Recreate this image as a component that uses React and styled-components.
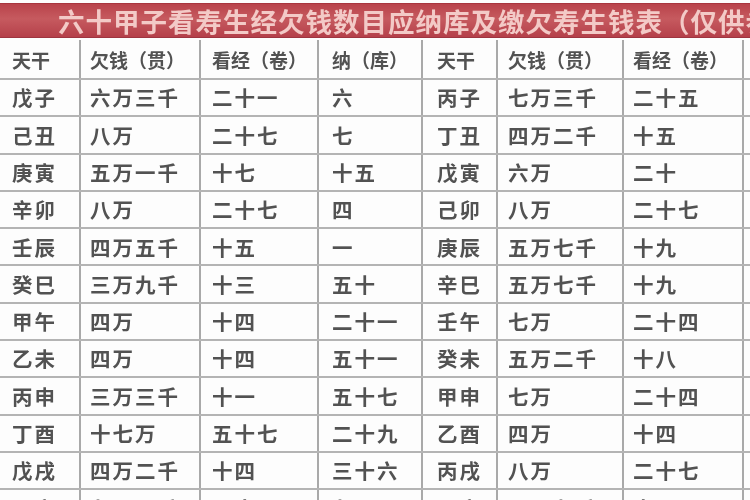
import * as React from "react";
import styled, { createGlobalStyle } from "styled-components";

const Global = createGlobalStyle`
	html, body {
		margin: 0;
		padding: 0;
		background: #ffffff;
	}
`;

const Page = styled.div`
	width: 750px;
	height: 500px;
	overflow: hidden;
	background: #fdfdfd;
	font-family: "Noto Sans CJK SC", "Noto Sans", sans-serif;
`;

const Banner = styled.div`
	margin-top: 3px;
	height: 33px;
	display: flex;
	align-items: center;
	padding-left: 58px;
	white-space: nowrap;
	overflow: hidden;
	background: linear-gradient(180deg, #b9434b 0%, #c65a5f 45%, #b5404a 100%);
	border-top: 1px solid #a8353e;
	border-bottom: 1px solid #9e3540;
	color: #f3cac7;
	font-size: 26.5px;
	font-weight: 700;
	letter-spacing: 1px;
	filter: blur(0.6px);
`;

const Sheet = styled.table`
	margin-top: 2px;
	border-collapse: collapse;
	table-layout: fixed;
	width: 850px;
	filter: blur(0.5px);
`;

const Row = styled.tr`
	height: ${(p) => (p.$head ? "39px" : "37.3px")};
`;

const Cell = styled.td`
	padding: 0 0 0 ${(p) => p.$pad || 11}px;
	border-left: 2px solid #a9a9a9;
	border-bottom: 2px solid #b4b4b4;
	color: #525252;
	font-size: ${(p) => (p.$head ? "19px" : "20.5px")};
	font-weight: 700;
	letter-spacing: ${(p) => (p.$head ? "0" : "2px")};
	white-space: nowrap;
	overflow: hidden;
	vertical-align: middle;
	line-height: 1;
	&:first-child {
		border-left: none;
	}
`;

const widths = [80, 120, 118, 104, 75, 126, 120, 107];
const pads = [12, 9, 11, 13, 14, 10, 9, 12];

const head = ["天干", "欠钱（贯）", "看经（卷）", "纳（库）", "天干", "欠钱（贯）", "看经（卷）", "纳（库）"];

const rows = [
	["戊子", "六万三千", "二十一", "六", "丙子", "七万三千", "二十五", ""],
	["己丑", "八万", "二十七", "七", "丁丑", "四万二千", "十五", ""],
	["庚寅", "五万一千", "十七", "十五", "戊寅", "六万", "二十", ""],
	["辛卯", "八万", "二十七", "四", "己卯", "八万", "二十七", ""],
	["壬辰", "四万五千", "十五", "一", "庚辰", "五万七千", "十九", ""],
	["癸巳", "三万九千", "十三", "五十", "辛巳", "五万七千", "十九", ""],
	["甲午", "四万", "十四", "二十一", "壬午", "七万", "二十四", ""],
	["乙未", "四万", "十四", "五十一", "癸未", "五万二千", "十八", ""],
	["丙申", "三万三千", "十一", "五十七", "甲申", "七万", "二十四", ""],
	["丁酉", "十七万", "五十七", "二十九", "乙酉", "四万", "十四", ""],
	["戊戌", "四万二千", "十四", "三十六", "丙戌", "八万", "二十七", ""],
	["己亥", "七万二千", "二十四", "七", "丁亥", "三万九千", "十三", ""],
];

export default function App() {
	return (
		<Page>
			<Global />
			<Banner>六十甲子看寿生经欠钱数目应纳库及缴欠寿生钱表（仅供参考）</Banner>
			<Sheet>
				<colgroup>
					{widths.map((w, i) => (
						<col key={i} style={{ width: w }} />
					))}
				</colgroup>
				<tbody>
					<Row $head>
						{head.map((h, i) => (
							<Cell key={i} $head $pad={pads[i]}>
								{h}
							</Cell>
						))}
					</Row>
					{rows.map((r, ri) => (
						<Row key={ri}>
							{r.map((c, ci) => (
								<Cell key={ci} $pad={pads[ci]}>
									{c}
								</Cell>
							))}
						</Row>
					))}
				</tbody>
			</Sheet>
		</Page>
	);
}
